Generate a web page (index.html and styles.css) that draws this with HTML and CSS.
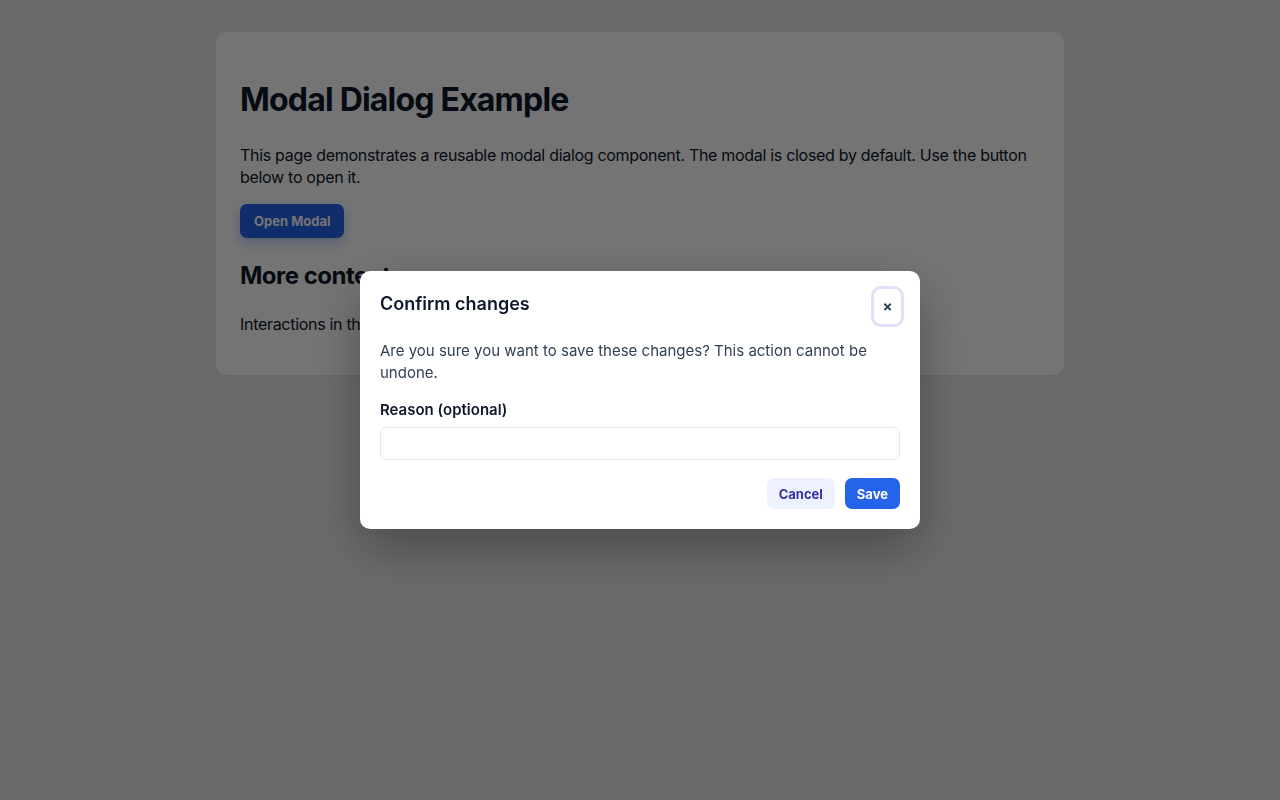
FILE: index.html
```html
<!DOCTYPE html>
<html lang="en">
<head>
<meta charset="utf-8">
<title>Modal Dialog Example</title>
<link rel="stylesheet" href="styles.css">
</head>
<body>
<main class="card">
  <h1 class="title">Modal Dialog Example</h1>
  <p class="text">This page demonstrates a reusable modal dialog component. The modal is closed by default. Use the button below to open it.</p>
  <button class="btn-primary open-btn" type="button">Open Modal</button>
  <h2 class="subtitle">More content</h2>
  <p class="text">Interactions in the page are blocked while the modal is open.</p>
</main>
<div class="overlay">
  <div class="modal" role="dialog" aria-labelledby="mtitle">
    <div class="modal-header">
      <h3 class="modal-title" id="mtitle">Confirm changes</h3>
      <button class="close-btn" type="button" aria-label="Close">×</button>
    </div>
    <p class="modal-text">Are you sure you want to save these changes? This action cannot be undone.</p>
    <label class="field-label" for="reason">Reason (optional)</label>
    <input class="field-input" id="reason" type="text">
    <div class="modal-actions">
      <button class="btn-secondary" type="button">Cancel</button>
      <button class="btn-primary" type="button">Save</button>
    </div>
  </div>
</div>
</body>
</html>
```
FILE: styles.css
```css
* { box-sizing: border-box; }
html, body { height: 100%; }
body {
  margin: 0;
  background: #e9eaee;
  font-family: Inter, "Noto Sans", "Liberation Sans", sans-serif;
  color: #0f172a;
}
.card {
  width: 848px;
  margin: 32px auto 0;
  background: #ffffff;
  border-radius: 10px;
  padding: 49px 24px 24px;
  box-shadow: 0 1px 3px rgba(0,0,0,0.06);
}
.title {
  margin: 0 0 25px;
  font-size: 32px;
  line-height: 38px;
  font-weight: 700;
  letter-spacing: -0.8px;
}
.text {
  margin: 0 0 16px;
  font-size: 16px;
  line-height: 22px;
  letter-spacing: -0.3px;
}
.subtitle {
  margin: 23px 0 23px;
  font-size: 24px;
  line-height: 29px;
  font-weight: 700;
  letter-spacing: -0.5px;
}
.btn-primary {
  border: 0;
  background: #2563eb;
  color: #ffffff;
  font-family: inherit;
  font-size: 13px;
  font-weight: 700;
  border-radius: 7px;
  height: 31px;
  padding: 0 12px;
  cursor: pointer;
}
.open-btn {
  display: block;
  height: 34px;
  padding: 0 14px;
  box-shadow: 0 4px 12px rgba(37,99,235,0.35);
}
.overlay {
  position: fixed;
  inset: 0;
  background: rgba(0,0,0,0.545);
  display: flex;
  align-items: center;
  justify-content: center;
}
.modal {
  width: 560px;
  background: #ffffff;
  border-radius: 10px;
  padding: 17px 20px 20px;
  box-shadow: 0 20px 50px rgba(0,0,0,0.3);
}
.modal-header {
  display: flex;
  justify-content: space-between;
  align-items: flex-start;
}
.modal-title {
  margin: 4px 0 0;
  font-size: 18px;
  line-height: 24px;
  font-weight: 600;
  color: #0f172a;
}
.close-btn {
  width: 33px;
  height: 41px;
  margin: -2px -4px 0 0;
  border: 3px solid #e0e0fb;
  border-radius: 10px;
  background: #ffffff;
  color: #334155;
  font-family: inherit;
  font-size: 15px;
  font-weight: 700;
  line-height: 1;
  padding: 0;
  cursor: pointer;
}
.modal-text {
  margin: 13px 0 16px;
  font-size: 15px;
  line-height: 22px;
  color: #334155;
}
.field-label {
  display: block;
  font-size: 15px;
  line-height: 20px;
  font-weight: 600;
  color: #0f172a;
  margin-bottom: 7px;
}
.field-input {
  display: block;
  width: 100%;
  height: 33px;
  border: 1px solid #e2e8f0;
  border-radius: 6px;
  font-family: inherit;
  font-size: 14px;
  padding: 0 10px;
  background: #ffffff;
}
.modal-actions {
  display: flex;
  justify-content: flex-end;
  gap: 10px;
  margin-top: 18px;
}
.btn-secondary {
  border: 0;
  background: #eef2ff;
  color: #3730a3;
  font-family: inherit;
  font-size: 13px;
  font-weight: 700;
  border-radius: 7px;
  height: 31px;
  padding: 0 12px;
  cursor: pointer;
}
```
